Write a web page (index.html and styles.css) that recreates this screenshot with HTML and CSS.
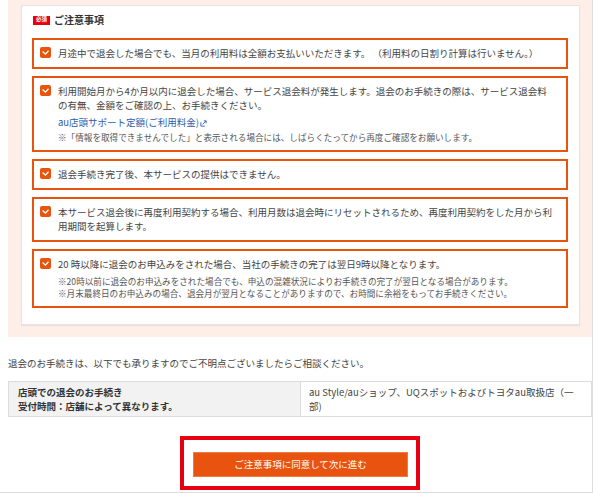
FILE: index.html
```html
<!DOCTYPE html>
<html lang="ja">
<head>
<meta charset="utf-8">
<title>ご注意事項</title>
<link rel="stylesheet" href="styles.css">
</head>
<body>
<div class="page">
  <section class="notice">
    <div class="card">
      <div class="card-head">
        <span class="badge">必須</span>
        <span class="card-title">ご注意事項</span>
      </div>
      <ul class="items">
        <li class="item">
          <span class="check"><svg viewBox="0 0 11 11" width="11" height="11"><path d="M2.6 4.6 L5.4 7.2 L8.5 3.8" fill="none" stroke="#fff" stroke-width="1.3"/></svg></span>
          <p class="main">月途中で退会した場合でも、当月の利用料は全額お支払いいただきます。 （利用料の日割り計算は行いません。）</p>
        </li>
        <li class="item">
          <span class="check"><svg viewBox="0 0 11 11" width="11" height="11"><path d="M2.6 4.6 L5.4 7.2 L8.5 3.8" fill="none" stroke="#fff" stroke-width="1.3"/></svg></span>
          <p class="main">利用開始月から4か月以内に退会した場合、サービス退会料が発生します。退会のお手続きの際は、サービス退会料の有無、金額をご確認の上、お手続きください。</p>
          <p class="link-line"><a class="link" href="#">au店頭サポート定額(ご利用料金)</a><svg class="ext" viewBox="0 0 8 8" width="7" height="7"><path d="M1 2.5 V7 H5.5" fill="none" stroke="#2a5db0" stroke-width="1"/><path d="M3 5 L7 1 M4.2 1 H7 V3.8" fill="none" stroke="#2a5db0" stroke-width="1"/></svg></p>
          <p class="note note-gap">※「情報を取得できませんでした」と表示される場合には、しばらくたってから再度ご確認をお願いします。</p>
        </li>
        <li class="item">
          <span class="check"><svg viewBox="0 0 11 11" width="11" height="11"><path d="M2.6 4.6 L5.4 7.2 L8.5 3.8" fill="none" stroke="#fff" stroke-width="1.3"/></svg></span>
          <p class="main">退会手続き完了後、本サービスの提供はできません。</p>
        </li>
        <li class="item">
          <span class="check"><svg viewBox="0 0 11 11" width="11" height="11"><path d="M2.6 4.6 L5.4 7.2 L8.5 3.8" fill="none" stroke="#fff" stroke-width="1.3"/></svg></span>
          <p class="main">本サービス退会後に再度利用契約する場合、利用月数は退会時にリセットされるため、再度利用契約をした月から利用期間を起算します。</p>
        </li>
        <li class="item">
          <span class="check"><svg viewBox="0 0 11 11" width="11" height="11"><path d="M2.6 4.6 L5.4 7.2 L8.5 3.8" fill="none" stroke="#fff" stroke-width="1.3"/></svg></span>
          <p class="main">20 時以降に退会のお申込みをされた場合、当社の手続きの完了は翌日9時以降となります。</p>
          <div class="notes">
            <p class="note">※20時以前に退会のお申込みをされた場合でも、申込の混雑状況によりお手続きの完了が翌日となる場合があります。</p>
            <p class="note">※月末最終日のお申込みの場合、退会月が翌月となることがありますので、お時間に余裕をもってお手続きください。</p>
          </div>
        </li>
      </ul>
    </div>
  </section>

  <p class="lead">退会のお手続きは、以下でも承りますのでご不明点ございましたらご相談ください。</p>

  <table class="shop">
    <tr>
      <th>店頭での退会のお手続き<br>受付時間：店舗によって異なります。</th>
      <td>au Style/auショップ、UQスポットおよびトヨタau取扱店（一部)</td>
    </tr>
  </table>

  <div class="action">
    <div class="action-frame">
      <button class="agree" type="button">ご注意事項に同意して次に進む</button>
    </div>
  </div>
</div>
</body>
</html>
```

FILE: styles.css
```css
* { box-sizing: border-box; }

html, body {
  margin: 0;
  padding: 0;
  background: #fff;
}

body {
  font-family: "Noto Sans CJK JP", "Noto Sans", sans-serif;
  color: #333;
  font-size: 9.5px;
}

p { margin: 0; }

.page {
  width: 593px;
  height: 493px;
  padding: 0 0 0 8px;
  border-right: 1px solid #dcdcdc;
  border-bottom: 1px solid #dcdcdc;
  display: flex;
  flex-direction: column;
}

.notice {
  background: #fdefe7;
  padding: 5px 12px 12px 13px;
}

.card {
  background: #fff;
  border: 1px solid #e4e4e4;
  box-shadow: 0 1px 1px rgba(0,0,0,0.06);
  padding: 8px 11px 16px 10px;
}

.card-head {
  display: flex;
  align-items: center;
  gap: 4px;
  height: 12px;
  margin: 0 0 12px 1px;
}

.badge {
  display: inline-flex;
  align-items: center;
  justify-content: center;
  width: 17px;
  height: 9px;
  background: #e60012;
  color: #fff;
  font-size: 5.5px;
  font-weight: bold;
  line-height: 1;
}

.card-title {
  font-size: 10px;
  font-weight: bold;
  color: #333;
  line-height: 12px;
}

.items {
  list-style: none;
  margin: 0;
  padding: 0;
  display: flex;
  flex-direction: column;
  gap: 7px;
}

.item {
  position: relative;
  border: 2px solid #e8530e;
  padding: 6px 12px 7px 24px;
}

.check {
  position: absolute;
  left: 6px;
  top: 7px;
  width: 11px;
  height: 11px;
  border-radius: 2px;
  background: #e8530e;
  display: flex;
}

.main {
  font-size: 9.5px;
  line-height: 14px;
  color: #444;
}

.link-line {
  margin-top: 3px;
  font-size: 9.5px;
  line-height: 14px;
  display: flex;
  align-items: center;
  gap: 1px;
}

.link {
  color: #2a5db0;
  text-decoration: none;
}

.ext { margin-top: 2px; }

.note {
  font-size: 8.6px;
  line-height: 12px;
  color: #555;
}

.note-gap {
  margin-top: 2px;
}

.notes {
  margin-top: 5px;
}

.notes .note {
  line-height: 11.5px;
}

.lead {
  margin-top: 19px;
  font-size: 9.5px;
  line-height: 14px;
  color: #444;
}

.shop {
  margin-top: 11px;
  width: 584px;
  border-collapse: collapse;
  table-layout: fixed;
}

.shop th, .shop td {
  border: 1px solid #dcdcdc;
  padding: 4px 9px 3px;
  font-size: 9.5px;
  line-height: 13.5px;
  vertical-align: top;
  text-align: left;
}

.shop th {
  width: 292px;
  background: #f2f2f2;
  font-weight: bold;
  color: #333;
}

.shop td {
  background: #fff;
  color: #444;
  padding-left: 8px;
}

.action {
  margin-top: 19px;
  display: flex;
  justify-content: center;
  width: 584px;
}

.action-frame {
  width: 240px;
  border: 4px solid #e60012;
  padding: 12px 8px 9px 9px;
}

.agree {
  display: block;
  width: 215px;
  height: 25px;
  margin: 0;
  background: #e8540f;
  border: 1px solid #ee7a45;
  color: #fff;
  font-family: "Noto Sans CJK JP", "Noto Sans", sans-serif;
  font-size: 9.5px;
  line-height: 1;
  padding: 0;
  cursor: pointer;
}
```
